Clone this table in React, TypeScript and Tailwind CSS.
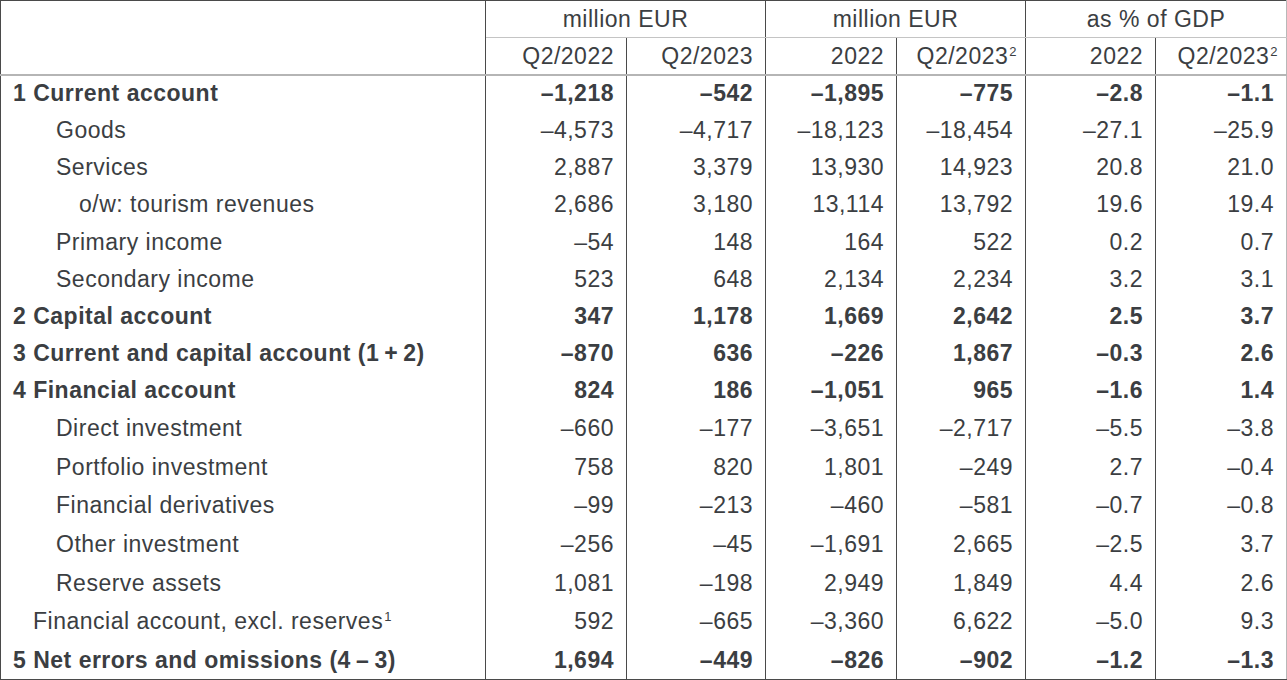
import React from 'react';

interface Row {
  label: React.ReactNode;
  values: string[];
  bold?: boolean;
  indent?: 0 | 1 | 2 | 3;
}

const Sup = ({ n }: { n: string }) => (
  <sup className="text-[13px] -top-[8px] ml-[1px]">{n}</sup>
);

const rows: Row[] = [
  { label: '1 Current account', values: ['–1,218', '–542', '–1,895', '–775', '–2.8', '–1.1'], bold: true },
  { label: 'Goods', values: ['–4,573', '–4,717', '–18,123', '–18,454', '–27.1', '–25.9'], indent: 1 },
  { label: 'Services', values: ['2,887', '3,379', '13,930', '14,923', '20.8', '21.0'], indent: 1 },
  { label: 'o/w: tourism revenues', values: ['2,686', '3,180', '13,114', '13,792', '19.6', '19.4'], indent: 2 },
  { label: 'Primary income', values: ['–54', '148', '164', '522', '0.2', '0.7'], indent: 1 },
  { label: 'Secondary income', values: ['523', '648', '2,134', '2,234', '3.2', '3.1'], indent: 1 },
  { label: '2 Capital account', values: ['347', '1,178', '1,669', '2,642', '2.5', '3.7'], bold: true },
  { label: '3 Current and capital account (1\u2009+\u20092)', values: ['–870', '636', '–226', '1,867', '–0.3', '2.6'], bold: true },
  { label: '4 Financial account', values: ['824', '186', '–1,051', '965', '–1.6', '1.4'], bold: true },
  { label: 'Direct investment', values: ['–660', '–177', '–3,651', '–2,717', '–5.5', '–3.8'], indent: 1 },
  { label: 'Portfolio investment', values: ['758', '820', '1,801', '–249', '2.7', '–0.4'], indent: 1 },
  { label: 'Financial derivatives', values: ['–99', '–213', '–460', '–581', '–0.7', '–0.8'], indent: 1 },
  { label: 'Other investment', values: ['–256', '–45', '–1,691', '2,665', '–2.5', '3.7'], indent: 1 },
  { label: 'Reserve assets', values: ['1,081', '–198', '2,949', '1,849', '4.4', '2.6'], indent: 1 },
  {
    label: (
      <>
        Financial account, excl. reserves<Sup n="1" />
      </>
    ),
    values: ['592', '–665', '–3,360', '6,622', '–5.0', '9.3'],
    indent: 3,
  },
  { label: '5 Net errors and omissions (4\u2009–\u20093)', values: ['1,694', '–449', '–826', '–902', '–1.2', '–1.3'], bold: true },
];

const indentClass = ['pl-[12px]', 'pl-[55px]', 'pl-[78px]', 'pl-[32px]'];

const App: React.FC = () => {
  return (
    <div className="bg-white w-[1287px] h-[680px] overflow-hidden font-['Liberation_Sans',Arial,sans-serif] text-[23px] tracking-[0.5px] text-[#3b3e42]">
      <table className="w-[1286px] table-fixed border-collapse border-t border-l border-b border-t-[#4a4a4a] border-l-[#4a4a4a] border-b-[#4a4a4a] border-r border-r-[#b8b8b8]">
        <colgroup>
          <col className="w-[485px]" />
          <col className="w-[141px]" />
          <col className="w-[139px]" />
          <col className="w-[131px]" />
          <col className="w-[129px]" />
          <col className="w-[130px]" />
          <col className="w-[131px]" />
        </colgroup>
        <thead>
          <tr className="h-[37px]">
            <th rowSpan={2} className="border-r border-[#4a4a4a] border-b-2 border-b-[#b5b5b5]" />
            <th colSpan={2} className="font-normal text-center border-r border-r-[#4a4a4a] border-b border-b-[#c4c4c4]">
              million EUR
            </th>
            <th colSpan={2} className="font-normal text-center border-r border-r-[#4a4a4a] border-b border-b-[#c4c4c4]">
              million EUR
            </th>
            <th colSpan={2} className="font-normal text-center border-b border-b-[#c4c4c4]">
              as % of GDP
            </th>
          </tr>
          <tr className="h-[37px] border-b-2 border-b-[#b5b5b5]">
            <th className="font-normal text-right pr-[12px] border-r border-r-[#4a4a4a]">Q2/2022</th>
            <th className="font-normal text-right pr-[12px] border-r border-r-[#4a4a4a]">Q2/2023</th>
            <th className="font-normal text-right pr-[12px] border-r border-r-[#4a4a4a]">2022</th>
            <th className="font-normal text-right pr-[8px] border-r border-r-[#4a4a4a]">
              Q2/2023<Sup n="2" />
            </th>
            <th className="font-normal text-right pr-[12px] border-r border-r-[#4a4a4a]">2022</th>
            <th className="font-normal text-right pr-[8px]">
              Q2/2023<Sup n="2" />
            </th>
          </tr>
        </thead>
        <tbody>
          {rows.map((row, i) => (
            <tr key={i} className={`${i < 9 ? 'h-[37.2px]' : 'h-[38.6px]'} ${row.bold ? 'font-bold' : ''}`}>
              <td className={`${indentClass[row.indent ?? 0]} whitespace-nowrap border-r border-r-[#4a4a4a]`}>
                {row.label}
              </td>
              {row.values.map((v, j) => (
                <td
                  key={j}
                  className={`text-right pr-[12px] whitespace-nowrap ${j < 5 ? 'border-r border-r-[#4a4a4a]' : ''}`}
                >
                  {v}
                </td>
              ))}
            </tr>
          ))}
        </tbody>
      </table>
    </div>
  );
};

export default App;
